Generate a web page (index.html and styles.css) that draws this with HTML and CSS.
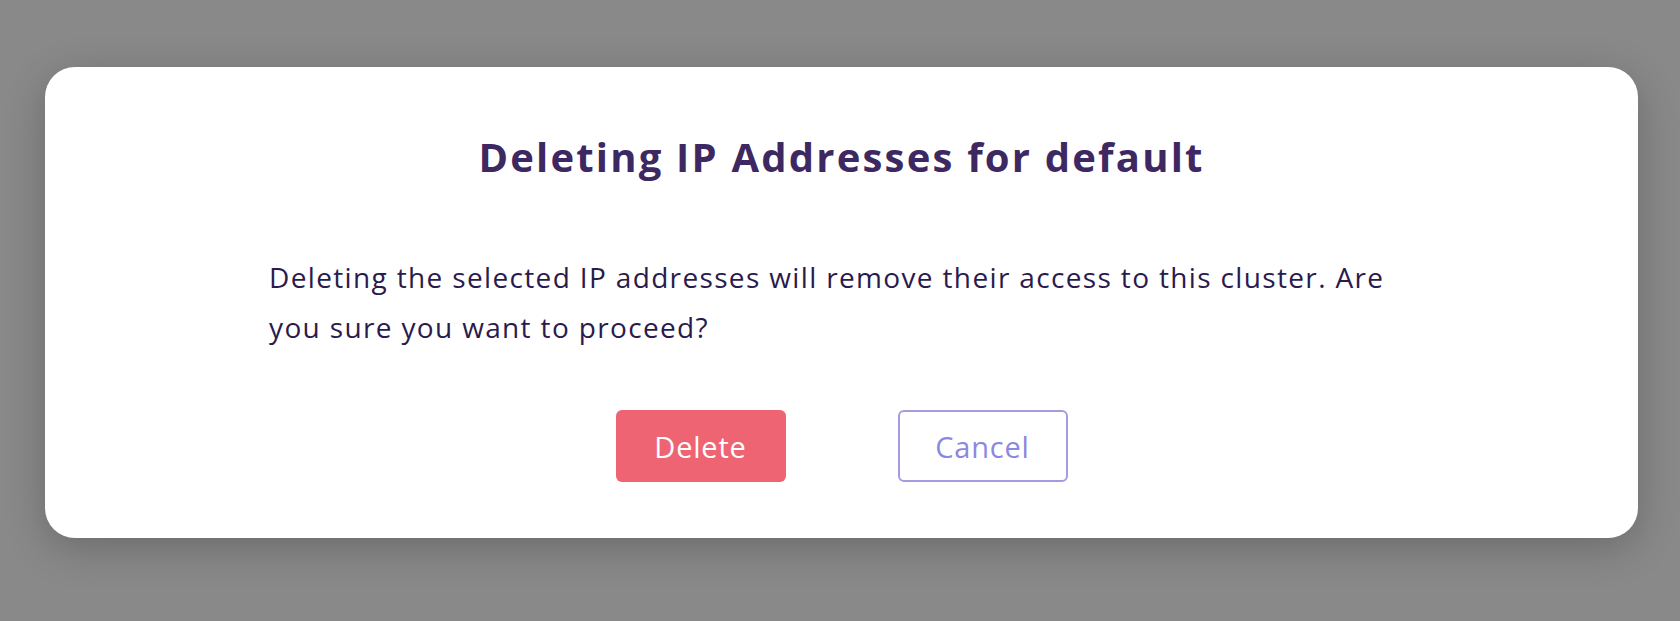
FILE: index.html
```html
<!DOCTYPE html>
<html lang="en">
<head>
<meta charset="utf-8">
<title>Delete IP Addresses</title>
<link rel="stylesheet" href="styles.css">
</head>
<body>
<div class="backdrop">
  <div class="modal" role="dialog" aria-labelledby="modal-title">
    <h2 class="modal-title" id="modal-title">Deleting IP Addresses for default</h2>
    <p class="modal-text">Deleting the selected IP addresses will remove their access to this cluster. Are you sure you want to proceed?</p>
    <div class="modal-actions">
      <button class="btn btn-danger" type="button">Delete</button>
      <button class="btn btn-outline" type="button">Cancel</button>
    </div>
  </div>
</div>
</body>
</html>
```

FILE: styles.css
```css
* { box-sizing: border-box; }
html, body {
  margin: 0;
  padding: 0;
  height: 100%;
}
body {
  background: #898989;
  font-family: "Open Sans", "Noto Sans", sans-serif;
}
.backdrop {
  padding: 67px 42px 0 45px;
}
.modal {
  background: #ffffff;
  border-radius: 30px;
  height: 471px;
  padding: 66px 0 0;
  display: flex;
  flex-direction: column;
  align-items: center;
  box-shadow: 0 10px 40px rgba(0, 0, 0, 0.22);
}
.modal-title {
  margin: 0;
  font-size: 40px;
  line-height: 47px;
  font-weight: 700;
  letter-spacing: 2.2px;
  color: #3d2862;
  text-align: center;
}
.modal-text {
  margin: 72px 0 0;
  width: 1145px;
  font-size: 28px;
  line-height: 50px;
  letter-spacing: 1.35px;
  color: #2a1b4e;
}
.modal-actions {
  margin-top: 58px;
  display: flex;
  gap: 112px;
}
.btn {
  width: 170px;
  height: 72px;
  border-radius: 6px;
  font-family: inherit;
  font-size: 29px;
  letter-spacing: 0.8px;
  cursor: pointer;
}
.btn-danger {
  background: #ee6473;
  border: none;
  color: #ffffff;
}
.btn-outline {
  background: #ffffff;
  border: 2px solid #a39ce3;
  color: #8e87e0;
}
```
